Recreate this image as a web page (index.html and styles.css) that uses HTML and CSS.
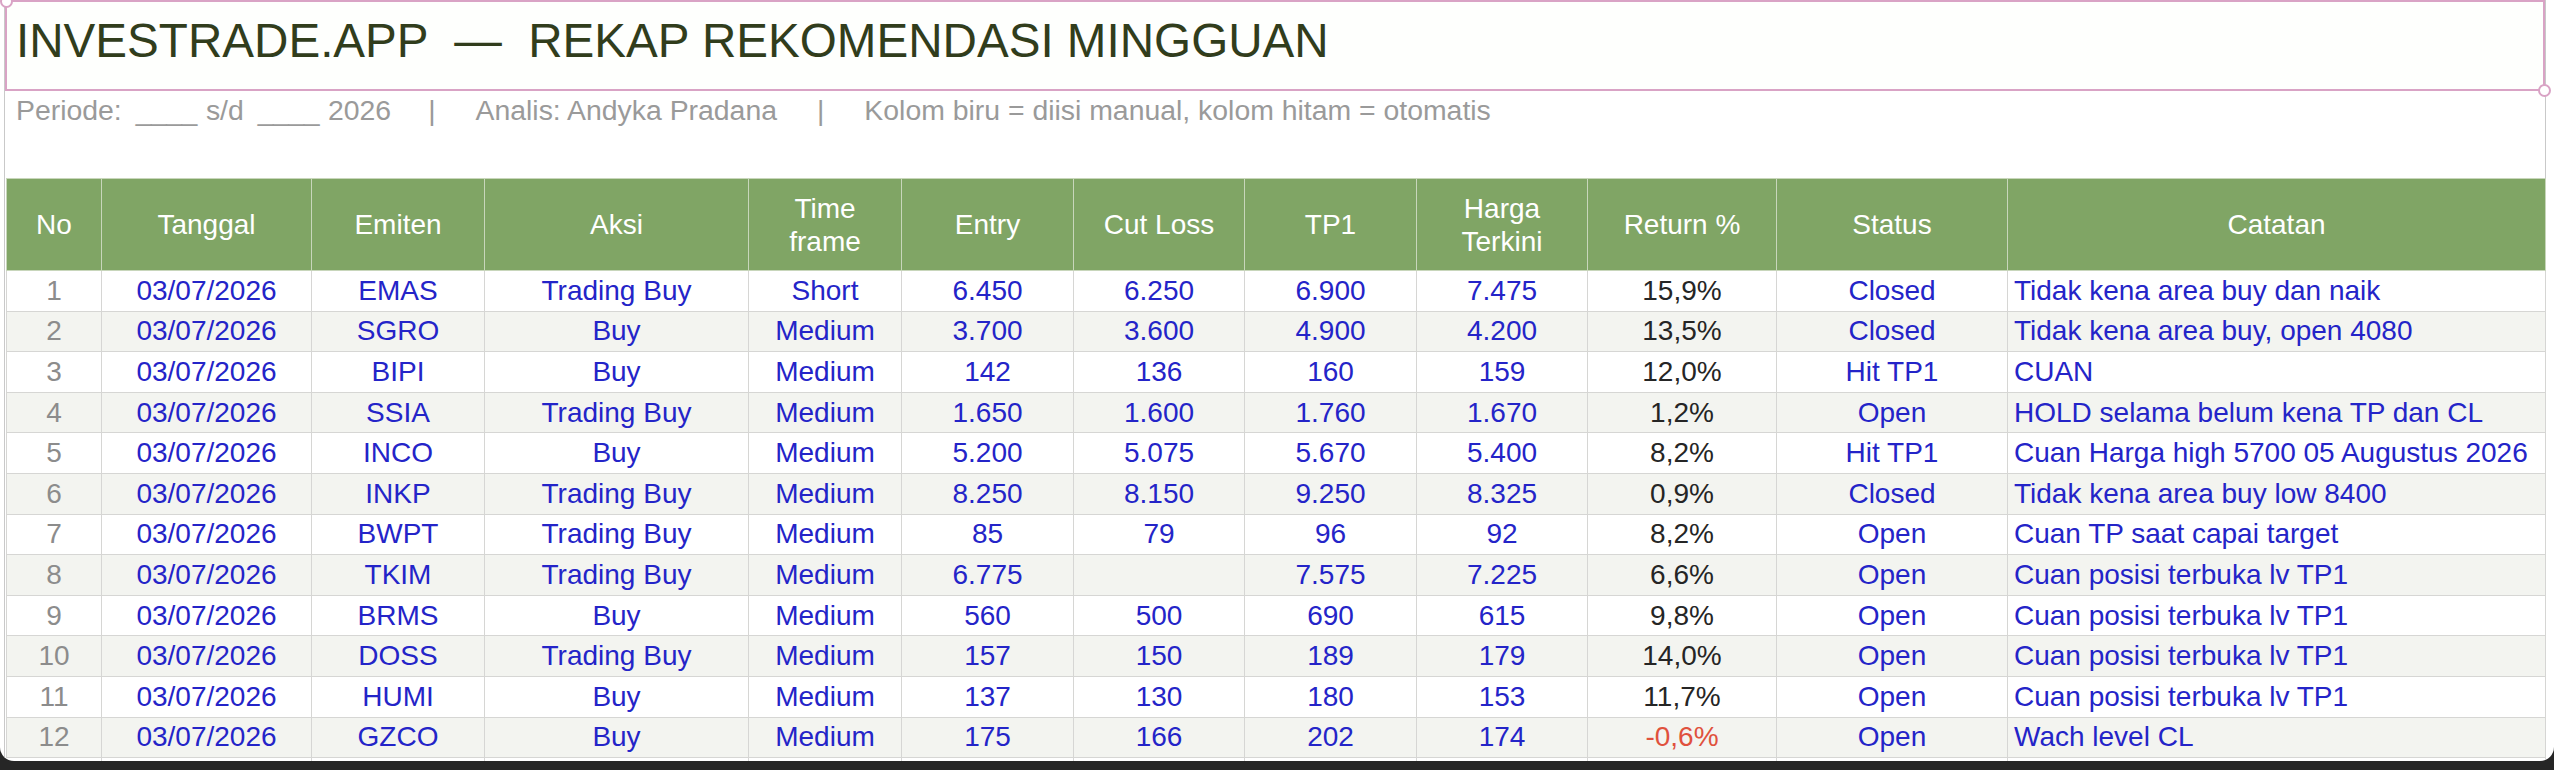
FILE: index.html
```html
<!DOCTYPE html>
<html lang="id">
<head>
<meta charset="utf-8">
<title>Rekap Rekomendasi Mingguan</title>
<link rel="stylesheet" href="styles.css">
</head>
<body>
<div class="window">
  <div class="sheet">
    <div class="title-box">
      <h1 class="title">INVESTRADE.APP &nbsp;—&nbsp; REKAP REKOMENDASI MINGGUAN</h1>
      <span class="handle handle-tl"></span>
      <span class="handle handle-br"></span>
    </div>
    <div class="meta">
      <span>Periode:</span>
      <span class="m-blank">____</span>
      <span class="m-sd">s/d</span>
      <span class="m-blank">____</span>
      <span class="m-year">2026</span>
      <span class="m-pipe m-first">|</span>
      <span class="m-item">Analis: Andyka Pradana</span>
      <span class="m-pipe">|</span>
      <span class="m-item">Kolom biru = diisi manual, kolom hitam = otomatis</span>
    </div>
    <table class="grid">
      <colgroup>
        <col class="c-no"><col class="c-tgl"><col class="c-emt"><col class="c-aksi"><col class="c-tf">
        <col class="c-num"><col class="c-num2"><col class="c-num"><col class="c-num2"><col class="c-ret">
        <col class="c-stat"><col class="c-note">
      </colgroup>
      <thead>
        <tr class="head">
          <th>No</th><th>Tanggal</th><th>Emiten</th><th>Aksi</th><th>Time<br>frame</th>
          <th>Entry</th><th>Cut Loss</th><th>TP1</th><th>Harga<br>Terkini</th><th>Return %</th>
          <th>Status</th><th>Catatan</th>
        </tr>
      </thead>
      <tbody>
        <tr><td class="no">1</td><td>03/07/2026</td><td>EMAS</td><td>Trading Buy</td><td>Short</td><td>6.450</td><td>6.250</td><td>6.900</td><td>7.475</td><td class="ret">15,9%</td><td>Closed</td><td class="note">Tidak kena area buy dan naik</td></tr>
        <tr><td class="no">2</td><td>03/07/2026</td><td>SGRO</td><td>Buy</td><td>Medium</td><td>3.700</td><td>3.600</td><td>4.900</td><td>4.200</td><td class="ret">13,5%</td><td>Closed</td><td class="note">Tidak kena area buy, open 4080</td></tr>
        <tr><td class="no">3</td><td>03/07/2026</td><td>BIPI</td><td>Buy</td><td>Medium</td><td>142</td><td>136</td><td>160</td><td>159</td><td class="ret">12,0%</td><td>Hit TP1</td><td class="note">CUAN</td></tr>
        <tr><td class="no">4</td><td>03/07/2026</td><td>SSIA</td><td>Trading Buy</td><td>Medium</td><td>1.650</td><td>1.600</td><td>1.760</td><td>1.670</td><td class="ret">1,2%</td><td>Open</td><td class="note">HOLD selama belum kena TP dan CL</td></tr>
        <tr><td class="no">5</td><td>03/07/2026</td><td>INCO</td><td>Buy</td><td>Medium</td><td>5.200</td><td>5.075</td><td>5.670</td><td>5.400</td><td class="ret">8,2%</td><td>Hit TP1</td><td class="note">Cuan Harga high 5700 05 Augustus 2026</td></tr>
        <tr><td class="no">6</td><td>03/07/2026</td><td>INKP</td><td>Trading Buy</td><td>Medium</td><td>8.250</td><td>8.150</td><td>9.250</td><td>8.325</td><td class="ret">0,9%</td><td>Closed</td><td class="note">Tidak kena area buy low 8400</td></tr>
        <tr><td class="no">7</td><td>03/07/2026</td><td>BWPT</td><td>Trading Buy</td><td>Medium</td><td>85</td><td>79</td><td>96</td><td>92</td><td class="ret">8,2%</td><td>Open</td><td class="note">Cuan TP saat capai target</td></tr>
        <tr><td class="no">8</td><td>03/07/2026</td><td>TKIM</td><td>Trading Buy</td><td>Medium</td><td>6.775</td><td></td><td>7.575</td><td>7.225</td><td class="ret">6,6%</td><td>Open</td><td class="note">Cuan posisi terbuka lv TP1</td></tr>
        <tr><td class="no">9</td><td>03/07/2026</td><td>BRMS</td><td>Buy</td><td>Medium</td><td>560</td><td>500</td><td>690</td><td>615</td><td class="ret">9,8%</td><td>Open</td><td class="note">Cuan posisi terbuka lv TP1</td></tr>
        <tr><td class="no">10</td><td>03/07/2026</td><td>DOSS</td><td>Trading Buy</td><td>Medium</td><td>157</td><td>150</td><td>189</td><td>179</td><td class="ret">14,0%</td><td>Open</td><td class="note">Cuan posisi terbuka lv TP1</td></tr>
        <tr><td class="no">11</td><td>03/07/2026</td><td>HUMI</td><td>Buy</td><td>Medium</td><td>137</td><td>130</td><td>180</td><td>153</td><td class="ret">11,7%</td><td>Open</td><td class="note">Cuan posisi terbuka lv TP1</td></tr>
        <tr><td class="no">12</td><td>03/07/2026</td><td>GZCO</td><td>Buy</td><td>Medium</td><td>175</td><td>166</td><td>202</td><td>174</td><td class="ret neg">-0,6%</td><td>Open</td><td class="note">Wach level CL</td></tr>
        <tr><td class="no"></td><td></td><td></td><td></td><td></td><td></td><td></td><td></td><td></td><td class="ret"></td><td></td><td class="note"></td></tr>
      </tbody>
    </table>
  </div>
</div>
</body>
</html>
```

FILE: styles.css
```css
html, body {
  margin: 0;
  padding: 0;
}

body {
  background: #262626;
  width: 2554px;
  height: 770px;
  overflow: hidden;
  font-family: "Liberation Sans", Arial, Helvetica, sans-serif;
}

.window {
  width: 2554px;
  height: 761px;
  background: #ffffff;
  border-radius: 0 0 14px 14px;
  overflow: hidden;
}

.sheet {
  margin-left: 4px;
  width: 2542px;
  height: 761px;
  border-left: 1px solid #c9c9c9;
  border-right: 1px solid #c9c9c9;
  box-sizing: border-box;
}

.title-box {
  position: relative;
  height: 91px;
  box-sizing: border-box;
  border: 2px solid #d9a3c5;
  padding: 12px 0 0 9px;
  background: #fefffd;
}

.title {
  margin: 0;
  font-weight: 400;
  font-size: 47.6px;
  line-height: 54px;
  color: #313d1c;
  white-space: nowrap;
}

.handle {
  position: absolute;
  width: 9px;
  height: 9px;
  border-radius: 50%;
  border: 2px solid #d9a3c5;
  background: #ffffff;
}

.handle-tl {
  left: -7px;
  top: -7px;
}

.handle-br {
  right: -8px;
  bottom: -8px;
}

.meta {
  display: flex;
  align-items: baseline;
  height: 87px;
  box-sizing: border-box;
  padding: 3px 0 0 11px;
  font-size: 28.4px;
  line-height: 32px;
  color: #9a9a9a;
  white-space: nowrap;
}

.m-blank {
  margin-left: 14px;
  letter-spacing: -0.5px;
}

.m-sd {
  margin-left: 9px;
}

.m-year {
  margin-left: 9px;
}

.m-pipe {
  margin-left: 40px;
}

.m-pipe.m-first {
  margin-left: 37px;
}

.m-item {
  margin-left: 40px;
}

.grid {
  margin-left: 1px;
  border-collapse: collapse;
  table-layout: fixed;
  width: 2539px;
  font-size: 28px;
}

.c-no { width: 95px; }
.c-tgl { width: 210px; }
.c-emt { width: 173px; }
.c-aksi { width: 264px; }
.c-tf { width: 153px; }
.c-num { width: 172px; }
.c-num2 { width: 171px; }
.c-ret { width: 189px; }
.c-stat { width: 231px; }
.c-note { width: 538px; }

.head th {
  height: 92px;
  padding: 0 2px;
  background: #80a565;
  color: #ffffff;
  font-weight: 400;
  line-height: 33px;
  text-align: center;
  border: 1px solid #c8d6bb;
  box-sizing: border-box;
}

.grid td {
  height: 40.6px;
  padding: 0 4px;
  border: 1px solid #d6d6d4;
  box-sizing: border-box;
  text-align: center;
  color: #2424c8;
  line-height: 32px;
  white-space: nowrap;
  overflow: hidden;
}

.grid tbody tr:nth-child(even) td {
  background: #f3f4f0;
}

.grid td.no {
  color: #8c8c8c;
}

.grid td.ret {
  color: #252525;
}

.grid td.neg {
  color: #e0513d;
}

.grid td.note {
  text-align: left;
  padding-left: 6px;
}
```
